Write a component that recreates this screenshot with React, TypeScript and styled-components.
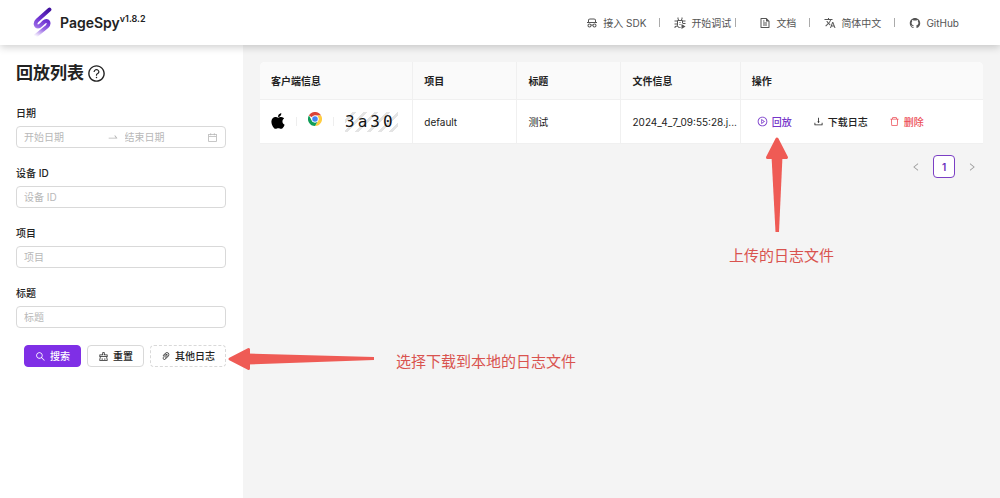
import React from 'react';
import styled, { createGlobalStyle } from 'styled-components';
import {
  AiOutlineSearch, AiOutlineClear, AiOutlinePaperClip, AiOutlinePlayCircle, AiOutlineDownload,
  AiOutlineDelete, AiOutlineCalendar, AiOutlineSwapRight, AiOutlineLeft, AiOutlineRight,
  AiOutlineQuestionCircle, AiOutlineGithub,
} from 'react-icons/ai';
import { FaApple } from 'react-icons/fa';
import { MdTranslate } from 'react-icons/md';
import { RiSpyLine, RiFileTextLine } from 'react-icons/ri';

const Global = createGlobalStyle`
  *, *::before, *::after { box-sizing: border-box; }
  body {
    margin: 0;
    background: #f4f4f4;
    color: #222;
    font: 10px/16px Inter, "Noto Sans CJK SC", sans-serif;
  }
  button, input { font: inherit; color: inherit; }
  svg { display: block; flex: none; }
`;

const Page = styled.div`
  display: flex;
  flex-direction: column;
  min-height: 100vh;
`;

const Header = styled.header`
  position: relative;
  z-index: 1;
  display: flex;
  align-items: center;
  justify-content: space-between;
  height: 45px;
  padding: 0 41px 0 33px;
  background: #fff;
  box-shadow: 0 2px 8px rgba(0, 0, 0, 0.2);
`;

const Brand = styled.a`
  display: flex;
  align-items: center;
  gap: 8px;
  color: #222;
  text-decoration: none;
`;

const BrandName = styled.span`
  font-size: 14px;
  line-height: 20px;
  font-weight: 600;
`;

const Version = styled.sup`
  font-size: 9px;
  line-height: 1;
`;

const Nav = styled.nav`
  display: flex;
  align-items: center;
`;

const NavLink = styled.a`
  display: flex;
  align-items: center;
  gap: 5px;
  color: #555;
  text-decoration: none;
`;

const Divider = styled.span<{ $tight?: boolean }>`
  width: 1px;
  height: 9px;
  margin: ${p => (p.$tight ? '0 23px 0 4px' : '0 14px 0 13px')};
  background: #aaa;
`;

const Body = styled.div`
  display: flex;
  flex: 1;
`;

const Sidebar = styled.aside`
  flex: 0 0 243px;
  padding: 18px 17px 18px 16px;
  background: #fff;
`;

const Title = styled.h1`
  display: flex;
  align-items: center;
  gap: 3px;
  margin: 0 0 22px;
  font-size: 17px;
  line-height: 20px;
  font-weight: 600;
`;

const Field = styled.div`
  margin-bottom: 17px;
`;

const Label = styled.label`
  display: block;
  margin-bottom: 5px;
  font-weight: 500;
`;

const Box = styled.div`
  display: flex;
  align-items: center;
  height: 22px;
  padding: 0 7px;
  border: 1px solid #d9d9d9;
  border-radius: 4px;
  background: #fff;
  color: #b5b5b5;
`;

const TextInput = styled.input`
  flex: 1;
  min-width: 0;
  width: 0;
  height: 16px;
  padding: 0;
  border: 0;
  outline: 0;
  background: none;
  &::placeholder { color: #b8b8b8; opacity: 1; }
`;

const RangeArrow = styled.span`
  margin-right: 6px;
`;

const Actions = styled.div`
  display: flex;
  justify-content: flex-end;
  gap: 6px;
`;

const Button = styled.button<{ $kind?: 'primary' | 'dashed' }>`
  display: flex;
  align-items: center;
  gap: 4px;
  height: 22px;
  padding: 0 10px;
  border: 1px ${p => (p.$kind === 'dashed' ? 'dashed' : 'solid')} ${p => (p.$kind === 'primary' ? '#7f2fe6' : '#d9d9d9')};
  border-radius: 4px;
  background: ${p => (p.$kind === 'primary' ? '#7f2fe6' : '#fff')};
  color: ${p => (p.$kind === 'primary' ? '#fff' : '#222')};
  font-weight: 500;
  white-space: nowrap;
`;

const Main = styled.main`
  flex: 1;
  min-width: 0;
  padding: 17px;
`;

const Table = styled.table`
  width: 100%;
  table-layout: fixed;
  border-collapse: separate;
  border-spacing: 0;
  border-radius: 5px 5px 0 0;
  overflow: hidden;
  background: #fff;
`;

const Col = styled.col<{ $share?: number }>`
  width: ${p => (p.$share ? `${p.$share}%` : 'auto')};
`;

const Th = styled.th`
  height: 38px;
  padding: 0 11px;
  border-right: 1px solid #f0f0f0;
  border-bottom: 1px solid #f0f0f0;
  background: #fafafa;
  text-align: left;
  font-weight: 600;
  &:last-child { border-right: 0; }
`;

const Td = styled.td`
  height: 44px;
  padding: 0 0 0 11px;
  border-right: 1px solid #f0f0f0;
  border-bottom: 1px solid #f0f0f0;
  white-space: nowrap;
  &:last-child { border-right: 0; }
`;

const Client = styled.div`
  display: flex;
  align-items: flex-start;
`;

const AppleIcon = styled(FaApple)`
  width: 14px;
  height: 18px;
  color: #000;
`;

const ClientRule = styled.span`
  align-self: center;
  width: 1px;
  height: 9px;
  margin: 0 11px;
  background: #eee;
`;

const DeviceId = styled.code`
  display: flex;
  gap: 3px;
  padding-right: 5px;
  background: repeating-linear-gradient(135deg, #fff 0 5px, #e4e4e4 5px 8px);
  color: #111;
  font: 16px/20px "DejaVu Sans Mono", monospace;
`;

const Ops = styled.div`
  display: flex;
  align-items: center;
  gap: 21px;
  padding-left: 5px;
`;

const OpButton = styled.button<{ $color?: string }>`
  display: flex;
  align-items: center;
  gap: 4px;
  padding: 0;
  border: 0;
  background: none;
  color: ${p => p.$color || '#222'};
  font-weight: 500;
`;

const Pagination = styled.nav`
  display: flex;
  justify-content: flex-end;
  align-items: center;
  gap: 6px;
  margin-top: 11px;
`;

const PageButton = styled.button<{ $current?: boolean }>`
  display: flex;
  align-items: center;
  justify-content: center;
  width: 22px;
  height: 23px;
  padding: 0;
  border: 1px solid ${p => (p.$current ? '#7b3fc4' : 'transparent')};
  border-radius: 4px;
  background: ${p => (p.$current ? '#fff' : 'none')};
  color: ${p => (p.$current ? '#6b2fbd' : '#999')};
  font-weight: 600;
`;

const Callout = styled.div<{ $x: number; $y: number }>`
  position: absolute;
  z-index: 2;
  left: ${p => p.$x}px;
  top: ${p => p.$y}px;
  color: #d9534f;
  font-size: 15px;
  line-height: 20px;
  white-space: nowrap;
  pointer-events: none;
`;

const Logo = () => (
  <svg width="19" height="31" viewBox="0 0 19 31" fill="none">
    <defs>
      <linearGradient id="logo" x1="17" y1="0" x2="4" y2="30" gradientUnits="userSpaceOnUse">
        <stop offset="0" stopColor="#3a0c96" />
        <stop offset="0.45" stopColor="#6f33d2" />
        <stop offset="0.7" stopColor="#9766e4" />
        <stop offset="1" stopColor="#fff" />
      </linearGradient>
    </defs>
    <path d="M16.500 2.500L4.200 13.500C1.500 16 2.500 19.500 5 19.500C6 19.500 7 18.800 8 17.800L11 15C13 13.200 15.500 14 15.600 16.300C15.700 17.800 15 18.700 14 19.600L2.500 29" stroke="url(#logo)" strokeWidth="3.800" strokeLinecap="round" strokeLinejoin="round" />
  </svg>
);

const BugIcon = () => (
  <svg width="12" height="12" viewBox="0 0 24 24" fill="none" stroke="currentColor" strokeWidth="2">
    <path d="M13 21H11a4 4 0 0 1-4-4V7h10v5M8 1v3l2 3M16 1v3l-2 3M1 8h6M1 14h6M2 22v-3l5-1M17 8h6M17 13h6M11 11h2M11 15h2" />
    <path d="M15 14l8 5-8 5z" fill="currentColor" stroke="none" />
  </svg>
);

const ChromeIcon = () => (
  <svg width="14" height="14" viewBox="0 0 48 48">
    <path fill="#db4437" d="M3.200 12A24 24 0 0 1 44.800 12H24a12 12 0 0 0-10.400 6z" />
    <path fill="#ffcd40" d="M44.800 12A24 24 0 0 1 24 48L34.400 30A12 12 0 0 0 34.400 18L31 12z" />
    <path fill="#0f9d58" d="M24 48A24 24 0 0 1 3.200 12L13.600 30A12 12 0 0 0 34.400 30z" />
    <circle cx="24" cy="24" r="12" fill="#fff" />
    <circle cx="24" cy="24" r="9.500" fill="#4285f4" />
  </svg>
);

const UpArrow = () => (
  <svg width="24" height="96" viewBox="0 0 24 96" fill="#ef5b55" stroke="#ef5b55" strokeLinejoin="round">
    <path strokeWidth="3" d="M12 3L21.500 21.500H2.500z" />
    <path stroke="none" d="M6.500 20H17.500L14 96H10.500z" />
  </svg>
);

const LeftArrow = () => (
  <svg width="148" height="24" viewBox="0 0 148 24" fill="#ef5b55" stroke="#ef5b55" strokeLinejoin="round">
    <path strokeWidth="3" d="M3 12L21.500 2.500V21.500z" />
    <path stroke="none" d="M20 6.500V17.500L147 13V10z" />
  </svg>
);

const fields = [
  { id: 'device', label: '设备 ID' },
  { id: 'project', label: '项目' },
  { id: 'title', label: '标题' },
];

const deviceId = '3a30';

export default function App() {
  return (
    <>
      <Global />
      <Page>
        <Header>
          <Brand href="#">
            <Logo />
            <BrandName>PageSpy<Version>v1.8.2</Version></BrandName>
          </Brand>
          <Nav>
            <NavLink href="#sdk"><RiSpyLine size={12} />接入 SDK</NavLink>
            <Divider />
            <NavLink href="#debug"><BugIcon />开始调试</NavLink>
            <Divider $tight />
            <NavLink href="#docs"><RiFileTextLine size={12} />文档</NavLink>
            <Divider />
            <NavLink href="#lang"><MdTranslate size={12} />简体中文</NavLink>
            <Divider />
            <NavLink href="#github"><AiOutlineGithub size={12} />GitHub</NavLink>
          </Nav>
        </Header>
        <Body>
          <Sidebar>
            <Title>回放列表<AiOutlineQuestionCircle size={19} /></Title>
            <Field>
              <Label htmlFor="start">日期</Label>
              <Box>
                <TextInput id="start" placeholder="开始日期" />
                <RangeArrow><AiOutlineSwapRight size={12} /></RangeArrow>
                <TextInput aria-label="结束日期" placeholder="结束日期" />
                <AiOutlineCalendar size={11} />
              </Box>
            </Field>
            {fields.map(f => (
              <Field key={f.id}>
                <Label htmlFor={f.id}>{f.label}</Label>
                <Box><TextInput id={f.id} placeholder={f.label} /></Box>
              </Field>
            ))}
            <Actions>
              <Button $kind="primary"><AiOutlineSearch size={11} />搜索</Button>
              <Button><AiOutlineClear size={11} />重置</Button>
              <Button $kind="dashed"><AiOutlinePaperClip size={10} />其他日志</Button>
            </Actions>
          </Sidebar>
          <Main>
            <Table>
              <colgroup>
                <Col $share={21.2} />
                <Col $share={14.4} />
                <Col $share={14.4} />
                <Col $share={16.5} />
                <Col />
              </colgroup>
              <thead>
                <tr><Th>客户端信息</Th><Th>项目</Th><Th>标题</Th><Th>文件信息</Th><Th>操作</Th></tr>
              </thead>
              <tbody>
                <tr>
                  <Td>
                    <Client>
                      <AppleIcon />
                      <ClientRule />
                      <ChromeIcon />
                      <ClientRule />
                      <DeviceId>
                        {deviceId.split('').map((char, i) => <span key={i}>{char}</span>)}
                      </DeviceId>
                    </Client>
                  </Td>
                  <Td>default</Td>
                  <Td>测试</Td>
                  <Td>2024_4_7_09:55:28.j...</Td>
                  <Td>
                    <Ops>
                      <OpButton $color="#7636c9"><AiOutlinePlayCircle size={11} />回放</OpButton>
                      <OpButton><AiOutlineDownload size={11} />下载日志</OpButton>
                      <OpButton $color="#ec4d56"><AiOutlineDelete size={11} />删除</OpButton>
                    </Ops>
                  </Td>
                </tr>
              </tbody>
            </Table>
            <Pagination>
              <PageButton aria-label="上一页"><AiOutlineLeft size={10} /></PageButton>
              <PageButton $current>1</PageButton>
              <PageButton aria-label="下一页"><AiOutlineRight size={10} /></PageButton>
            </Pagination>
          </Main>
        </Body>
      </Page>
      <Callout $x={765} $y={136}><UpArrow /></Callout>
      <Callout $x={729} $y={246}>上传的日志文件</Callout>
      <Callout $x={227} $y={347}><LeftArrow /></Callout>
      <Callout $x={396} $y={352}>选择下载到本地的日志文件</Callout>
    </>
  );
}
